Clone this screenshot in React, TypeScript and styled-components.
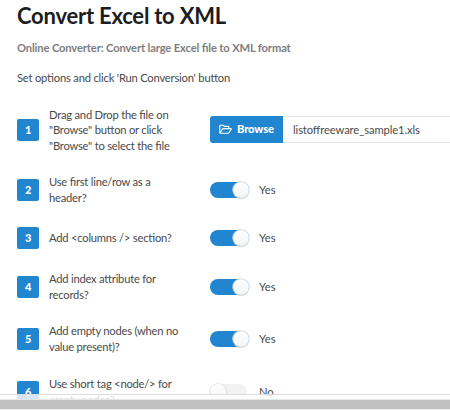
import React from "react";
import styled, { createGlobalStyle } from "styled-components";

const GlobalStyle = createGlobalStyle`
  * { box-sizing: border-box; }
  html, body { margin: 0; background: #fff; overflow: hidden; }
`;

const Page = styled.main`
  position: relative;
  width: 450px;
  height: 410px;
  overflow: hidden;
  padding-left: 17px;
  background: #fff;
  color: #4a4a4a;
  font: 11.2px/15.6px Lato, sans-serif;
  letter-spacing: -0.22px;
  font-feature-settings: "liga" 1;
  white-space: nowrap;
`;

const Title = styled.h1`
  margin: 0;
  height: 33px;
  font-size: 22px;
  line-height: 32px;
  font-weight: 700;
  letter-spacing: -0.23px;
  color: #1d1d1f;
`;

const Subtitle = styled.h2`
  margin: 0;
  height: 30px;
  font-size: 11.2px;
  line-height: 29px;
  font-weight: 700;
  letter-spacing: -0.14px;
  color: #7e7e7e;
`;

const Intro = styled.p`
  margin: 0;
  height: 35px;
  line-height: 29px;
  letter-spacing: -0.2px;
`;

const Row = styled.div<{ $height: number }>`
  display: grid;
  grid-template-columns: 32px 161px 1fr;
  align-items: center;
  height: ${(p) => p.$height}px;
`;

const Badge = styled.span`
  width: 22px;
  height: 22px;
  border-radius: 2px;
  background: #2185d0;
  color: #fff;
  font-size: 11px;
  font-weight: 900;
  line-height: 22px;
  text-align: center;
`;

const Label = styled.div`
  white-space: pre-line;
`;

const FilePicker = styled.div`
  display: flex;
  height: 27px;
  margin-bottom: 1px;
`;

const Browse = styled.button`
  display: flex;
  align-items: center;
  gap: 5px;
  width: 73px;
  padding: 0 0 1px 9px;
  border: 0;
  border-radius: 3px 0 0 3px;
  background: #2185d0;
  color: #fff;
  font: 900 11.2px/26px Lato, sans-serif;
  letter-spacing: -0.15px;
`;

const FileName = styled.div`
  flex: 1;
  padding-left: 10px;
  border-top: 1px solid #e3e3e3;
  border-bottom: 1px solid #e3e3e3;
  line-height: 26px;
  letter-spacing: -0.1px;
`;

const Option = styled.div`
  display: flex;
  align-items: center;
  gap: 10px;
  letter-spacing: 0;
`;

const Track = styled.span<{ $on: boolean }>`
  display: flex;
  justify-content: ${(p) => (p.$on ? "flex-end" : "flex-start")};
  width: ${(p) => (p.$on ? 39 : 37)}px;
  height: 16px;
  margin-right: ${(p) => (p.$on ? 0 : 2)}px;
  border-radius: 8px;
  background: ${(p) => (p.$on ? "#2185d0" : "#f2f2f2")};
`;

const Knob = styled.span`
  width: 16px;
  height: 16px;
  border-radius: 50%;
  background: linear-gradient(#fff, #f4f4f4);
  box-shadow: 0 0 0 0.7px #d3d7da, 0 1px 1px rgba(0, 0, 0, 0.12);
`;

const BottomBar = styled.div`
  position: absolute;
  left: 0;
  right: 0;
  bottom: 0;
  height: 16px;
  border-top: 1px solid #ddd;
  background: linear-gradient(
    rgba(255, 255, 255, 0.8) 0 4px,
    #e6e6e6 4px 5px,
    #c1c1c1 5px 14px,
    #eee 14px
  );
`;

const steps = [
  { label: "Use first line/row as a\nheader?", height: 56, on: true },
  { label: "Add <columns /> section?", height: 40, on: true },
  { label: "Add index attribute for\nrecords?", height: 57, on: true },
  { label: "Add empty nodes (when no\nvalue present)?", height: 48, on: true },
  { label: "Use short tag <node/> for\nempty nodes?", height: 58, on: false },
];

function FolderIcon() {
  return (
    <svg width="13" height="11" viewBox="0 0 13 11" fill="none" stroke="#fff" strokeWidth="1.1" strokeLinejoin="round">
      <path d="M.8 9V2.1Q.8 1.2 1.7 1.2H4L5.2 2.4H9Q9.9 2.4 9.9 3.3V4.6M.8 9 3.4 5.2Q3.8 4.6 4.5 4.6H11.6Q12.7 4.6 12.1 5.5L10 8.6Q9.6 9.3 8.8 9.3H1.5Q.8 9.3.8 8.6" />
    </svg>
  );
}

export default function App() {
  return (
    <>
      <GlobalStyle />
      <Page>
        <Title>Convert Excel to XML</Title>
        <Subtitle>Online Converter: Convert large Excel file to XML format</Subtitle>
        <Intro>Set options and click 'Run Conversion' button</Intro>
        <Row $height={64}>
          <Badge>1</Badge>
          <Label>{'Drag and Drop the file on\n"Browse" button or click\n"Browse" to select the file'}</Label>
          <FilePicker>
            <Browse>
              <FolderIcon />
              Browse
            </Browse>
            <FileName>listoffreeware_sample1.xls</FileName>
          </FilePicker>
        </Row>
        {steps.map((step, i) => (
          <Row key={step.label} $height={step.height}>
            <Badge>{i + 2}</Badge>
            <Label>{step.label}</Label>
            <Option>
              <Track $on={step.on}>
                <Knob />
              </Track>
              {step.on ? "Yes" : "No"}
            </Option>
          </Row>
        ))}
        <BottomBar />
      </Page>
    </>
  );
}
